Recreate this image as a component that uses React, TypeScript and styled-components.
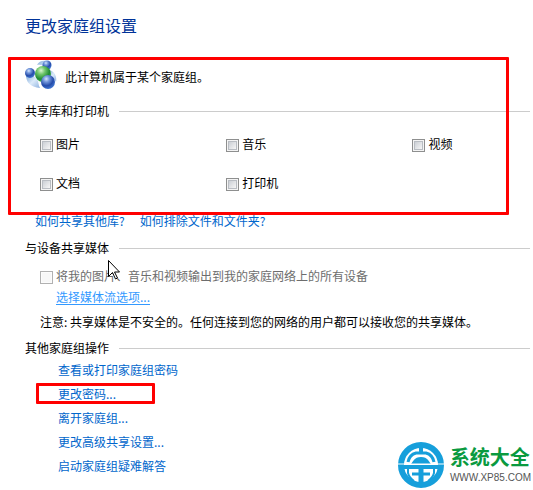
import React from "react";
import styled, { createGlobalStyle } from "styled-components";

const GlobalStyle = createGlobalStyle`
  body {
    margin: 0;
    background: #fff;
    color: #000;
    font: 12px/16px "Noto Sans CJK SC", sans-serif;
  }
`;

const Page = styled.main`
  position: relative;
  padding: 15px 3px 16px 25px;
`;

const Title = styled.h1`
  margin: 0 0 25px;
  font-size: 16px;
  line-height: 20px;
  font-weight: 400;
  color: #003399;
`;

const Marked = styled.div`
  position: relative;
`;

const Highlight = styled.div`
  position: absolute;
  top: -3px;
  right: 21px;
  bottom: -24px;
  left: -17px;
  border: 3px solid #f00;
  border-radius: 1px;
  pointer-events: none;
`;

const Status = styled.div`
  display: flex;
  align-items: flex-start;
  gap: 8px;
  height: 34px;
  margin-bottom: 9px;
  line-height: 34px;
`;

const Heading = styled.h2`
  display: flex;
  align-items: center;
  gap: 10px;
  margin: 0;
  font-size: 12px;
  line-height: 16px;
  font-weight: 400;

  &::after {
    content: "";
    flex: 1;
    height: 1px;
    background: #ccc;
  }
`;

const Options = styled.div`
  display: grid;
  grid-template-columns: 38% 38% 1fr;
  row-gap: 23px;
  margin: 17px 0 0 15px;
`;

const CheckLabel = styled.label<{ $disabled?: boolean }>`
  display: flex;
  align-items: flex-end;
  gap: 3px;
  white-space: nowrap;
  color: ${(p) => (p.$disabled ? "#6d6d6d" : "#000")};
`;

const Box = styled.input`
  appearance: none;
  box-sizing: border-box;
  width: 13px;
  height: 13px;
  margin: 0;
  border: 1px solid #8e8f8f;
  background: linear-gradient(135deg, #cbcfd5, #f6f6f6) content-box, #f4f4f4;
  padding: 2px;
  box-shadow: inset 0 0 0 1px #f4f4f4, inset 0 0 0 2px #b9bdc3;

  &:checked {
    background: #4b6da8 content-box, #f4f4f4;
  }

  &:disabled {
    border-color: #b1b1b1;
    background: #f7f7f7;
    box-shadow: inset 0 0 0 1px #fcfcfc;
  }
`;

const HelpLinks = styled.nav`
  display: flex;
  gap: 15px;
  margin: 22px 0 11px 10px;
`;

const Link = styled.a<{ $hot?: boolean }>`
  color: ${(p) => (p.$hot ? "#3399ff" : "#0066cc")};
  text-decoration: ${(p) => (p.$hot ? "underline" : "none")};
  text-underline-offset: 2px;
`;

const Media = styled.div`
  display: flex;
  flex-direction: column;
  align-items: flex-start;
  margin: 12px 0 10px 15px;
`;

const MediaLink = styled.div`
  margin: 5px 0 9px 16px;
`;

const Note = styled.p`
  margin: 0;
`;

const Actions = styled.ul`
  display: flex;
  flex-direction: column;
  align-items: flex-start;
  gap: 8px;
  margin: 6px 0 0 33px;
  padding: 0;
  list-style: none;
`;

const Action = styled.li`
  position: relative;
`;

const ActionHighlight = styled.div`
  position: absolute;
  top: -3px;
  left: -22px;
  box-sizing: border-box;
  width: 119px;
  height: 21px;
  border: 3px solid #f00;
  border-radius: 1px;
  pointer-events: none;
`;

const Pointer = styled.svg`
  position: absolute;
  top: 260px;
  left: 108px;
  pointer-events: none;
`;

const Brand = styled.aside`
  position: absolute;
  right: 2px;
  bottom: 2px;
  display: flex;
  align-items: center;
  gap: 6px;
`;

const BrandText = styled.div`
  display: flex;
  flex-direction: column;
  align-items: flex-start;
`;

const BrandName = styled.strong`
  font-size: 20px;
  line-height: 26px;
  font-weight: 700;
  color: #0a9a3f;
`;

const BrandSite = styled.span`
  font: 10px/16px "Liberation Sans", sans-serif;
  color: #555;
`;

function HomegroupIcon() {
  return (
    <svg width="32" height="30" viewBox="0 0 32 30" aria-hidden="true">
      <defs>
        <radialGradient id="blue" cx="38%" cy="28%" r="70%">
          <stop offset="0" stopColor="#d5e6ff" />
          <stop offset=".3" stopColor="#7599dc" />
          <stop offset=".7" stopColor="#254caa" />
          <stop offset="1" stopColor="#3c70cc" />
        </radialGradient>
        <radialGradient id="green" cx="38%" cy="28%" r="72%">
          <stop offset="0" stopColor="#d9f6cf" />
          <stop offset=".35" stopColor="#6ec56a" />
          <stop offset=".75" stopColor="#1f8b34" />
          <stop offset="1" stopColor="#43b54c" />
        </radialGradient>
        <linearGradient id="swoosh" x1="0" y1="0" x2="1" y2="1">
          <stop offset="0" stopColor="#7ba6d8" />
          <stop offset=".5" stopColor="#dcebfa" />
          <stop offset="1" stopColor="#8fb2e0" />
        </linearGradient>
      </defs>
      <path d="M12 5C14 0 23-1 26 4c1 3-1 6-3 8-1-5-6-8-11-7Z" fill="url(#swoosh)" />
      <path d="M1 15c0 7 4 12 14 13-2-3-1-6-3-9-3-2-4-5-11-4Z" fill="url(#swoosh)" />
      <path d="M25 10c5 2 7 7 6 12-1-4-6-5-8-4 3-2 3-5 2-8Z" fill="url(#swoosh)" />
      <circle cx="22" cy="5" r="4.500" fill="url(#blue)" />
      <circle cx="5" cy="13" r="5" fill="url(#blue)" />
      <circle cx="18" cy="14" r="8" fill="url(#green)" />
      <circle cx="23" cy="22" r="7" fill="url(#blue)" />
    </svg>
  );
}

function BrandIcon() {
  return (
    <svg width="46" height="46" viewBox="0 0 46 46" aria-hidden="true">
      <circle cx="23" cy="23" r="20" fill="#fff" stroke="#169fdb" strokeWidth="6" />
      <g fill="none" stroke="#169fdb">
        <path d="M23 5v6" strokeWidth="4" />
        <path d="M10 20c1-5 4-8 8-9h10c4 1 7 4 8 9" strokeWidth="3" />
        <path d="M5 25h36" strokeWidth="4" />
        <path d="M23 25v17" strokeWidth="5" />
        <path d="M14 32h18" strokeWidth="3" />
        <path d="M10 27v4c1 4 3 6 6 8M36 27v4c-1 4-3 6-6 8" strokeWidth="2" />
      </g>
      <path d="M13 22c2-2 3-7 10-7s8 5 10 7Z" fill="#169fdb" />
      <path d="M0 22h46" stroke="#fff" strokeWidth="1" />
    </svg>
  );
}

const libraries = ["图片", "音乐", "视频", "文档", "打印机"];

const actions = [
  { text: "查看或打印家庭组密码" },
  { text: "更改密码...", marked: true },
  { text: "离开家庭组..." },
  { text: "更改高级共享设置..." },
  { text: "启动家庭组疑难解答" },
];

export default function App() {
  return (
    <>
      <GlobalStyle />
      <Page>
        <Title>更改家庭组设置</Title>
        <Marked>
          <Status>
            <HomegroupIcon />
            <span>此计算机属于某个家庭组。</span>
          </Status>
          <Heading>共享库和打印机</Heading>
          <Options>
            {libraries.map((name) => (
              <CheckLabel key={name}>
                <Box type="checkbox" />
                {name}
              </CheckLabel>
            ))}
          </Options>
          <Highlight />
        </Marked>
        <HelpLinks>
          <Link href="#libraries">如何共享其他库?</Link>
          <Link href="#exclude">如何排除文件和文件夹?</Link>
        </HelpLinks>
        <Heading>与设备共享媒体</Heading>
        <Media>
          <CheckLabel $disabled>
            <Box type="checkbox" disabled />
            将我的图片、音乐和视频输出到我的家庭网络上的所有设备
          </CheckLabel>
          <MediaLink>
            <Link href="#streaming" $hot>选择媒体流选项...</Link>
          </MediaLink>
          <Note>注意: 共享媒体是不安全的。任何连接到您的网络的用户都可以接收您的共享媒体。</Note>
        </Media>
        <Heading>其他家庭组操作</Heading>
        <Actions>
          {actions.map(({ text, marked }) => (
            <Action key={text}>
              <Link href="#action">{text}</Link>
              {marked && <ActionHighlight />}
            </Action>
          ))}
        </Actions>
        <Pointer width="13" height="20" viewBox="0 0 13 20" aria-hidden="true">
          <path
            d="M.5.5v16l4-4 3 6.500 2-1-3-6h5Z"
            fill="#fff"
            stroke="#000"
            strokeWidth="1"
          />
        </Pointer>
        <Brand>
          <BrandIcon />
          <BrandText>
            <BrandName>系统大全</BrandName>
            <BrandSite>WWW.XP85.COM</BrandSite>
          </BrandText>
        </Brand>
      </Page>
    </>
  );
}
